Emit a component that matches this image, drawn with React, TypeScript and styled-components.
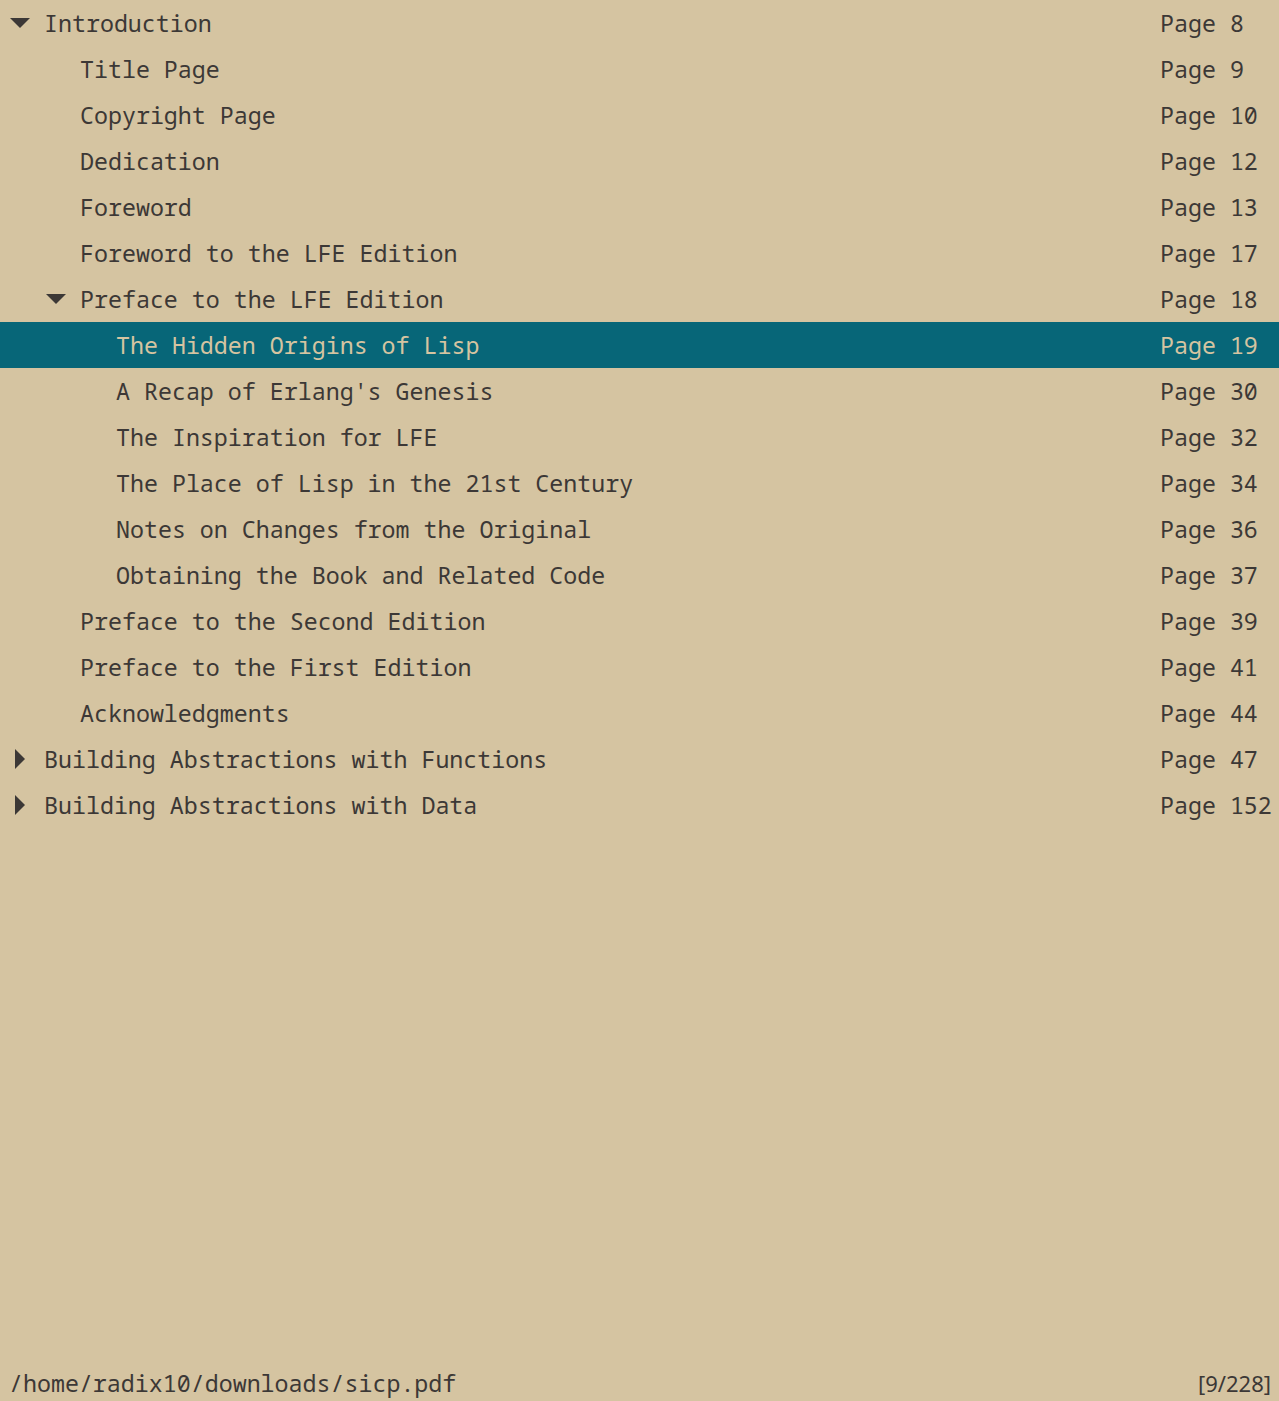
import React from "react";
import styled, { createGlobalStyle } from "styled-components";

const GlobalStyle = createGlobalStyle`
  html, body {
    margin: 0;
    padding: 0;
    background: #d5c4a1;
  }
  #root {
    min-height: 100vh;
  }
`;

type Entry = {
  title: string;
  page: number;
  level: number;
  toggle?: "open" | "closed";
  selected?: boolean;
};

const entries: Entry[] = [
  { title: "Introduction", page: 8, level: 0, toggle: "open" },
  { title: "Title Page", page: 9, level: 1 },
  { title: "Copyright Page", page: 10, level: 1 },
  { title: "Dedication", page: 12, level: 1 },
  { title: "Foreword", page: 13, level: 1 },
  { title: "Foreword to the LFE Edition", page: 17, level: 1 },
  { title: "Preface to the LFE Edition", page: 18, level: 1, toggle: "open" },
  { title: "The Hidden Origins of Lisp", page: 19, level: 2, selected: true },
  { title: "A Recap of Erlang's Genesis", page: 30, level: 2 },
  { title: "The Inspiration for LFE", page: 32, level: 2 },
  { title: "The Place of Lisp in the 21st Century", page: 34, level: 2 },
  { title: "Notes on Changes from the Original", page: 36, level: 2 },
  { title: "Obtaining the Book and Related Code", page: 37, level: 2 },
  { title: "Preface to the Second Edition", page: 39, level: 1 },
  { title: "Preface to the First Edition", page: 41, level: 1 },
  { title: "Acknowledgments", page: 44, level: 1 },
  { title: "Building Abstractions with Functions", page: 47, level: 0, toggle: "closed" },
  { title: "Building Abstractions with Data", page: 152, level: 0, toggle: "closed" },
];

const Screen = styled.div`
  display: flex;
  flex-direction: column;
  height: 100vh;
  background: #d5c4a1;
  color: #3c3836;
  font-family: "Noto Sans Mono", "DejaVu Sans Mono", monospace;
  font-size: 23.3px;
`;

const Outline = styled.div`
  flex: 1;
  display: flex;
  flex-direction: column;
`;

const Row = styled.div<{ $selected?: boolean }>`
  display: flex;
  align-items: center;
  height: 46px;
  line-height: 46px;
  white-space: pre;
  background: ${(p) => (p.$selected ? "#076678" : "transparent")};
  color: ${(p) => (p.$selected ? "#d5c4a1" : "#3c3836")};
`;

const TitleCell = styled.div<{ $level: number }>`
  flex: 1;
  display: flex;
  align-items: center;
  padding-left: ${(p) => p.$level * 36}px;
  min-width: 0;
`;

const ToggleSlot = styled.div`
  width: 40px;
  height: 46px;
  display: flex;
  align-items: center;
  justify-content: center;
  flex-shrink: 0;
  margin-right: 4px;
`;

const Arrow = styled.svg<{ $open: boolean }>`
  width: 20px;
  height: 20px;
  margin-top: -1px;
  transform: rotate(${(p) => (p.$open ? "0deg" : "-90deg")});
`;

const PageCell = styled.div`
  width: 119px;
  flex-shrink: 0;
`;

const StatusBar = styled.div`
  display: flex;
  justify-content: space-between;
  align-items: center;
  height: 36px;
  line-height: 36px;
  padding: 0 8px 0 9px;
  color: #3c3836;
`;

const FilePath = styled.span`
  font-family: "Noto Sans Mono", "DejaVu Sans Mono", monospace;
  font-size: 23.3px;
  white-space: pre;
`;

const PageCounter = styled.span`
  font-family: "Noto Sans", "Open Sans", sans-serif;
  font-size: 22px;
`;

function Toggle({ state }: { state?: "open" | "closed" }) {
  return (
    <ToggleSlot>
      {state && (
        <Arrow $open={state === "open"} viewBox="0 0 20 20">
          <polygon points="0,5 20,5 10,15" fill="#3c3836" />
        </Arrow>
      )}
    </ToggleSlot>
  );
}

export default function App() {
  return (
    <>
      <GlobalStyle />
      <Screen>
        <Outline>
          {entries.map((e, i) => (
            <Row key={i} $selected={e.selected}>
              <TitleCell $level={e.level}>
                <Toggle state={e.toggle} />
                <span>{e.title}</span>
              </TitleCell>
              <PageCell>{`Page ${e.page}`}</PageCell>
            </Row>
          ))}
        </Outline>
        <StatusBar>
          <FilePath>/home/radix10/downloads/sicp.pdf</FilePath>
          <PageCounter>[9/228]</PageCounter>
        </StatusBar>
      </Screen>
    </>
  );
}
